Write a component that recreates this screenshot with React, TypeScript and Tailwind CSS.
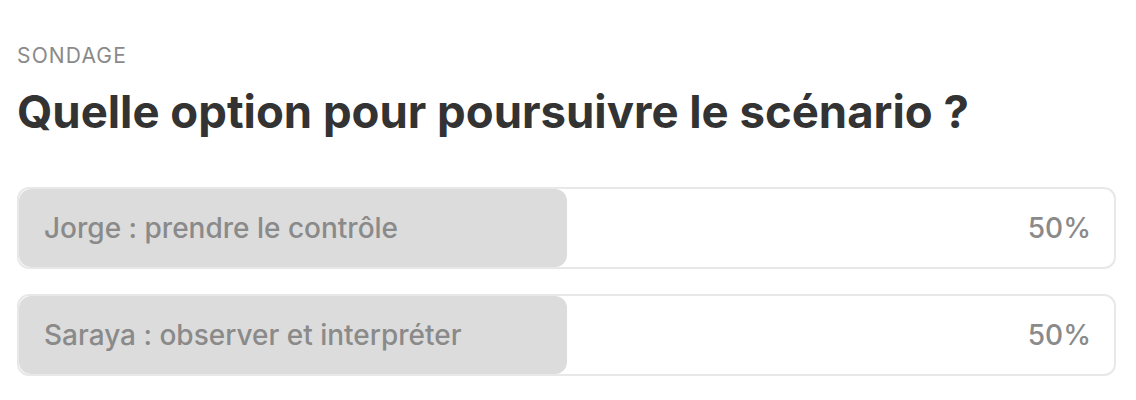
const options = [
  { label: 'Jorge : prendre le contrôle', pct: 50 },
  { label: 'Saraya : observer et interpréter', pct: 50 },
]

export default function App() {
  return (
    <div className="h-[400px] w-[1136px] bg-white pl-[17px] pr-[20px] pt-[43px] font-['Inter',sans-serif]">
      <div className="text-[21px] leading-[26px] tracking-[0.055em] text-[#8a8a8a]">SONDAGE</div>
      <h1 className="mt-[16px] text-[45.5px] leading-[54px] font-bold text-[#333333]">
        Quelle option pour poursuivre le scénario ?
      </h1>
      <div className="mt-[48px] flex flex-col gap-[25px]">
        {options.map((o) => (
          <div
            key={o.label}
            className="relative flex h-[82px] items-center overflow-hidden rounded-[12px] border-2 border-[#e8e8e8]"
          >
            <div
              className="absolute inset-y-0 left-0 rounded-[12px] bg-[#dcdcdc]"
              style={{ width: `${o.pct}%` }}
            />
            <span className="relative flex-1 pl-[25px] text-[28px] font-medium text-[#8a8a8a]">{o.label}</span>
            <span className="relative pr-[23px] text-[28px] font-medium text-[#8a8a8a]">{o.pct}%</span>
          </div>
        ))}
      </div>
    </div>
  )
}
